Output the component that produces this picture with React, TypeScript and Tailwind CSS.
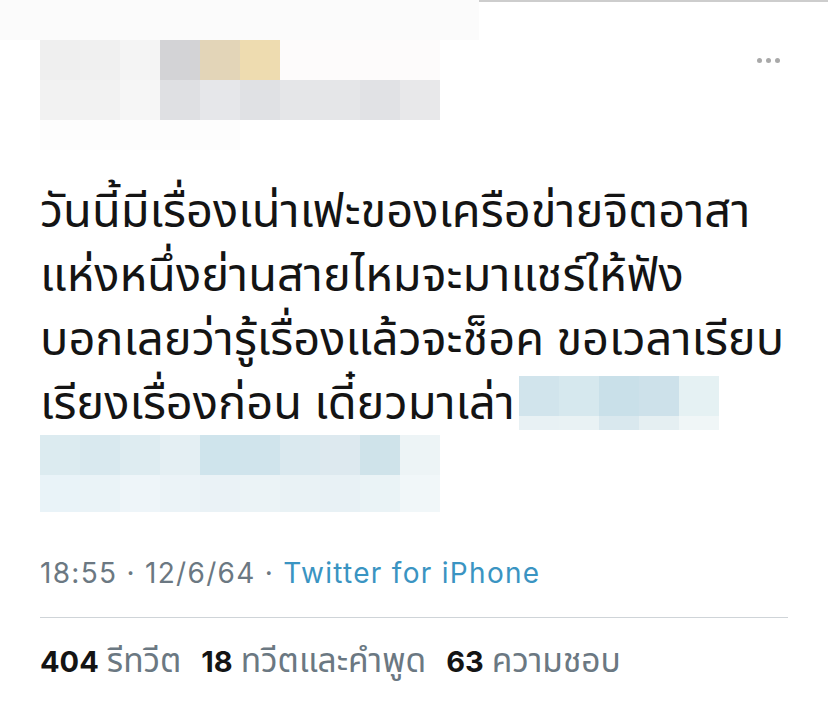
const pixelRowA = ['#efefef', '#f0f0f0', '#f4f4f4', '#d3d3d6', '#e3d5b8', '#eedcb0', '#fdfbfb', '#fdfbfb', '#fdfbfb', '#fdfbfb']
const pixelRowB = ['#f2f2f2', '#f2f2f2', '#f6f6f6', '#dfe0e3', '#e6e7ea', '#e0e1e4', '#e5e6e8', '#e5e6e8', '#e1e2e5', '#e8e8ea']
const blueRowA = ['#d1e4ec', '#d6e8ee', '#c9e0e9', '#cde1ea', '#e5f1f3']
const blueRowB = ['#e8f1f4', '#e9f2f4', '#d9e8ee', '#e5eff2', '#f0f6f7']
const blueRowC = ['#dcebf0', '#d9e9ef', '#deecf1', '#e4eff3', '#cfe4ec', '#d0e4ec', '#dae9ef', '#dde9ef', '#cfe3ea', '#edf4f6']
const blueRowD = ['#e9f3f8', '#eaf3f7', '#eef5f9', '#ebf3f7', '#eaf2f6', '#ebf3f6', '#e9f2f5', '#e8f1f5', '#eaf3f6', '#f1f7f9']

const Pixels = ({ colors, h = 'h-[40px]' }: { colors: string[]; h?: string }) => (
  <div className="flex">
    {colors.map((c, i) => (
      <div key={i} className={`w-[40px] ${h}`} style={{ backgroundColor: c }} />
    ))}
  </div>
)

const Stat = ({ n, label }: { n: string; label: string }) => (
  <span className="flex items-baseline gap-[8px]">
    <b className="font-bold text-[29px] text-[#141414]">{n}</b>
    <span className="text-[33.5px] text-[#6b7882]">{label}</span>
  </span>
)

const App = () => {
  return (
    <div className="w-[828px] h-[702px] bg-white overflow-hidden text-[#141414] font-['Noto_Sans_Thai','Loma','Garuda','Liberation_Sans',sans-serif]">
      {/* blurred header */}
      <div className="flex h-[40px]">
        <div className="w-[479px] bg-[#fbfbfb]" />
        <div className="flex-1 border-t-2 border-[#cdcdcd]" />
      </div>
      <div className="flex justify-between pl-[40px] pr-[48px]">
        <div>
          <Pixels colors={pixelRowA} />
          <Pixels colors={pixelRowB} />
          <div className="w-[200px] h-[30px] bg-[#fdfdfd]" />
        </div>
        <div className="flex gap-[4px] pt-[18px]">
          <span className="w-[5px] h-[5px] rounded-full bg-[#a9a9a9]" />
          <span className="w-[5px] h-[5px] rounded-full bg-[#a9a9a9]" />
          <span className="w-[5px] h-[5px] rounded-full bg-[#a9a9a9]" />
        </div>
      </div>

      {/* tweet body */}
      <div className="pl-[40px] mt-[31px] text-[47px] leading-[64px] whitespace-nowrap">
        <div>วันนี้มีเรื่องเน่าเฟะของเครือข่ายจิตอาสา</div>
        <div>แห่งหนึ่งย่านสายไหมจะมาแชร์ให้ฟัง</div>
        <div>บอกเลยว่ารู้เรื่องแล้วจะช็อค ขอเวลาเรียบ</div>
        <div className="flex items-start h-[58px]">
          <span>เรียงเรื่องก่อน เดี๋ยวมาเล่า</span>
          <div className="ml-auto mr-[109px] mt-[3px]">
            <Pixels colors={blueRowA} />
            <Pixels colors={blueRowB} h="h-[14px]" />
          </div>
        </div>
      </div>
      <div className="pl-[40px] mt-[4px]">
        <Pixels colors={blueRowC} />
        <Pixels colors={blueRowD} h="h-[37px]" />
      </div>

      {/* meta */}
      <div className="pl-[40px] mt-[43px] h-[36px] leading-[36px] text-[28px] tracking-[1.3px] text-[#6b7882] font-['Inter','Noto_Sans_Thai',sans-serif] whitespace-nowrap">
        18:55 · 12/6/64 · <span className="text-[#3a94c2]">Twitter for iPhone</span>
      </div>
      <div className="mx-[40px] mt-[26px] border-t border-[#cfd4d8]" />
      <div className="pl-[40px] mt-[22px] flex items-baseline gap-[20px] leading-[40px] font-['Inter','Noto_Sans_Thai',sans-serif] whitespace-nowrap">
        <Stat n="404" label="รีทวีต" />
        <Stat n="18" label="ทวีตและคำพูด" />
        <Stat n="63" label="ความชอบ" />
      </div>
    </div>
  )
}

export default App
